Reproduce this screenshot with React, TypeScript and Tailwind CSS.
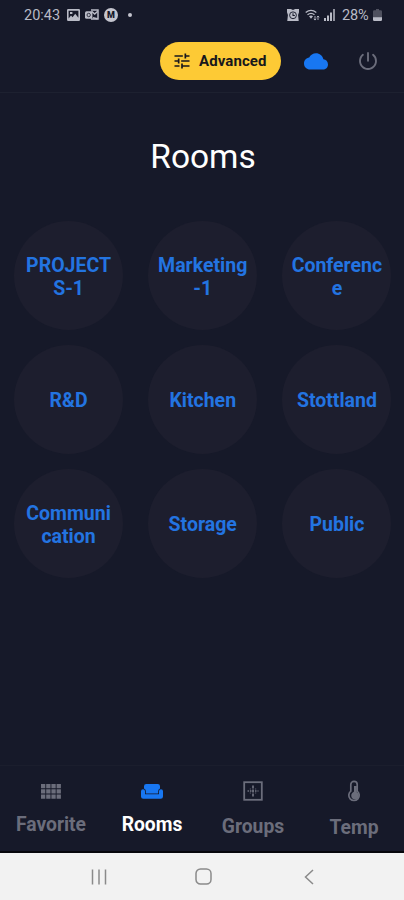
import * as React from "react";
import { IoPower } from "react-icons/io5";
import { MdTune } from "react-icons/md";

const ROOMS = [
  ["PROJECT", "S-1"],
  ["Marketing", "-1"],
  ["Conferenc", "e"],
  ["R&D"],
  ["Kitchen"],
  ["Stottland"],
  ["Communi", "cation"],
  ["Storage"],
  ["Public"],
];

const CloudIcon = () => (
  <svg width="24" height="17" viewBox="0 0 24 17" fill="currentColor">
    <path d="M19.4 6.3C18.6 2.6 15.6.2 12 .2 9 .2 6.4 1.9 5.2 4.6 2.2 5 0 7.5 0 10.5c0 3.400 2.700 6.100 6.100 6.100h12.700c2.900 0 5.200-2.300 5.200-5.200 0-2.700-2-4.900-4.600-5.100z" />
  </svg>
);

const GridIcon = () => (
  <svg width="20" height="15" viewBox="0 0 20 15" fill="currentColor">
    <path d="M0 0h4.3v4.3H0zM5.2 0h4.3v4.3H5.2zM10.4 0h4.3v4.3h-4.3zM15.6 0h4.3v4.3h-4.3z" />
    <path d="M0 5.2h4.3v4.3H0zM5.2 5.2h4.3v4.3H5.2zM10.4 5.2h4.3v4.3h-4.3zM15.6 5.2h4.3v4.3h-4.3z" />
    <path d="M0 10.4h4.3v4.3H0zM5.2 10.4h4.3v4.3H5.2zM10.4 10.4h4.3v4.3h-4.3zM15.6 10.4h4.3v4.3h-4.3z" />
  </svg>
);

const SofaIcon = () => (
  <svg width="22" height="15" viewBox="0 0 22 15" fill="currentColor">
    <path d="M5.3 0h11.4Q19 0 19 2.2v2.3q-1.8.6-1.8 2.500v2.500H4.8V7Q4.8 5.1 3 4.500V2.200Q3 0 5.300 0z" />
    <path d="M2 5.300Q4 5.300 4 7.300v3h14v-3q0-2 2-2t2 2v5.200q0 2.300-2.300 2.300H2.300Q0 14.800 0 12.500V7.300q0-2 2-2z" />
  </svg>
);

const GroupsIcon = () => (
  <svg width="20" height="20" viewBox="0 0 20 20" fill="none" stroke="currentColor">
    <rect x="1.2" y="1.2" width="17.6" height="17.6" strokeWidth="1.8" />
    <path d="M10 4.5v11" strokeWidth="1.8" strokeDasharray="3 1" />
    <path d="M4.5 10h11" strokeWidth="1.7" strokeDasharray="1.5 1" />
    <path d="M7.3 7.5v5M12.7 7.5v5" strokeWidth="1" strokeDasharray="1 1" />
  </svg>
);

const ThermometerIcon = () => (
  <svg width="14" height="22" viewBox="0 0 14 22" fill="none" stroke="currentColor">
    <path d="M3.8 11.2V4.5a3.2 3.2 0 0 1 6.4 0v6.700a5.200 5.200 0 1 1-6.400 0z" strokeWidth="1.7" />
    <path d="M7 6h2.800v6.300a3.800 3.800 0 1 1-4.600.8L7 11.500z" fill="currentColor" stroke="none" />
  </svg>
);

const TABS = [
  { label: "Favorite", icon: <GridIcon />, iconClass: "pt-[18px]", labelClass: "mt-[14px]" },
  { label: "Rooms", icon: <SofaIcon />, iconClass: "pt-[18px]", labelClass: "mt-[14px]" },
  { label: "Groups", icon: <GroupsIcon />, iconClass: "pt-[15px]", labelClass: "mt-[14px]" },
  { label: "Temp", icon: <ThermometerIcon />, iconClass: "pt-[14px]", labelClass: "mt-[14px]" },
];

function StatusBar() {
  return (
    <div className="flex h-[30px] items-center justify-between pr-[22px] pl-[24px] text-[14.5px] text-[#b9bbc6]">
      <div className="flex items-center">
        <span className="w-[37px] pt-[2px] leading-none">20:43</span>
        <svg className="ml-[6px]" width="13" height="12" viewBox="0 0 13 12" fill="currentColor">
          <path fillRule="evenodd" d="M1.2 0h10.6Q13 0 13 1.2v9.6q0 1.2-1.2 1.2H1.2Q0 12 0 10.8V1.2Q0 0 1.2 0zM1.6 1.8v7.8l2.4-3 1.6 1.6 2.6-3.4 3.2 4V1.8z" />
          <path d="M3 3h2.4v2H3z" />
        </svg>
        <svg className="ml-[5px]" width="14" height="12" viewBox="0 0 14 12" fill="none" stroke="currentColor">
          <path d="M6 1h7v9H6" strokeWidth="1.5" />
          <path d="M6.5 2.2 9.7 5l3-2.8M8 8.8l4.5.9" strokeWidth="1.5" />
          <rect x="0" y="2.2" width="7.4" height="7.6" rx="1.5" fill="currentColor" stroke="none" />
          <circle cx="3.7" cy="6" r="1.7" stroke="#161929" strokeWidth=".8" />
        </svg>
        <span className="ml-[5px] flex size-[14px] items-center justify-center rounded-full bg-[#c4c5ce] text-[9px] leading-none font-black text-[#161929]">
          M
        </span>
        <span className="ml-[10px] size-[4px] rounded-full bg-[#c4c5ce]" />
      </div>

      <div className="flex items-center">
        <svg width="12" height="12" viewBox="0 0 13 13" fill="none">
          <path d="M0 3.5V0h4.2L6.5 1.2 8.8 0H13v3.5l-1 3 .7 6.5H.3L1 6.5z" fill="currentColor" />
          <circle cx="6.5" cy="6.8" r="3.7" stroke="#161929" strokeWidth="1" />
          <path d="M6.5 4.5V7h2" stroke="#161929" strokeWidth="1.1" />
        </svg>
        <svg className="ml-[6px]" width="15" height="12" viewBox="0 0 15 12" fill="none" stroke="currentColor">
          <path d="M.7 3.6q5.3-4.4 10.6 0M2.5 5.8q3.5-2.7 7 0" strokeWidth="1.3" />
          <path d="M4 7.2q2-1.3 4 0L6 9.8z" fill="currentColor" stroke="none" />
          <path d="M10 7v4M8.8 9.8l1.2 1.3 1.2-1.3M13 11V7m-1.2 1.3L13 7l1.2 1.3" strokeWidth=".9" />
        </svg>
        <svg className="ml-[4px]" width="11" height="12" viewBox="0 0 11 12" fill="currentColor">
          <path d="M0 9h2v3H0zM3 6.5h2V12H3zM6 3.5h2V12H6z" />
          <path d="M9 0h2v12H9z" opacity=".75" />
        </svg>
        <span className="ml-[7px] w-[28px] pt-[2px] leading-none tracking-[-0.2px]">28%</span>
        <svg className="ml-[3px]" width="9" height="12" viewBox="0 0 9 12" fill="currentColor">
          <path d="M3 0h3v1.2h1.8Q9 1.2 9 2.4V9H0V2.4q0-1.2 1.2-1.2H3z" opacity=".35" />
          <path d="M0 8.3h9v2.5Q9 12 7.8 12H1.2Q0 12 0 10.8z" />
        </svg>
      </div>
    </div>
  );
}

function Header() {
  return (
    <header className="flex h-[63px] items-center justify-end border-b border-[#1d2130] pr-[25px]">
      <button className="flex h-[38px] w-[121px] items-center rounded-full bg-[#fdca35] pl-[12px] text-[15px] font-bold text-[#17171c]">
        <MdTune size={20} />
        <span className="ml-[7px] tracking-[0.1px]">Advanced</span>
      </button>
      <span className="ml-[23px] text-[#1877f2]">
        <CloudIcon />
      </span>
      <IoPower className="ml-[29px] text-[#6b6d7b]" size={22} />
    </header>
  );
}

export default function App() {
  const [activeTab, setActiveTab] = React.useState("Rooms");

  return (
    <div className="flex h-[900px] w-[404px] flex-col overflow-hidden bg-[#161929] font-['Roboto',sans-serif]">
      <StatusBar />
      <Header />

      <main className="flex-1">
        <h1 className="mt-[42px] pl-[2px] text-center text-[33.5px] leading-[44px] text-white">Rooms</h1>
        <div className="mt-[42px] grid grid-cols-3 justify-items-center gap-y-[15px] pl-[1.5px]">
          {ROOMS.map((lines) => (
            <button
              key={lines.join("")}
              className="flex size-[109px] flex-col items-center justify-center rounded-full bg-[#1d1e2e] pt-[2px] text-[19.5px] leading-[23px] font-bold text-[#2374e1]"
            >
              {lines.map((line) => (
                <span key={line}>{line}</span>
              ))}
            </button>
          ))}
        </div>
      </main>

      <nav className="grid h-[88px] grid-cols-4 border-t border-[#1b1e2d] border-b-2 border-b-[#06070c]">
        {TABS.map((tab) => {
          const active = tab.label === activeTab;
          return (
            <button
              key={tab.label}
              onClick={() => setActiveTab(tab.label)}
              className="flex flex-col items-center justify-start"
            >
              <span className={`${tab.iconClass} ${active ? "text-[#1877f2]" : "text-[#6b6d7b]"}`}>{tab.icon}</span>
              <span
                className={`${tab.labelClass} pl-[1px] text-[19.3px] leading-[23px] font-bold ${active ? "text-white" : "text-[#6b6d7b]"}`}
              >
                {tab.label}
              </span>
            </button>
          );
        })}
      </nav>

      <div className="grid h-[47px] grid-cols-[98px_106px_106px] items-center bg-[#f2f2f2] text-[#8a8a8a]">
        <svg className="ml-[91px]" width="16" height="16" viewBox="0 0 16 16" fill="none" stroke="currentColor" strokeWidth="1.5">
          <path d="M1.5 .5v15M8 .5v15M14.5 .5v15" />
        </svg>
        <svg className="ml-[97px]" width="17" height="17" viewBox="0 0 17 17" fill="none" stroke="currentColor" strokeWidth="1.5">
          <rect x="1" y="1" width="15" height="15" rx="4.5" />
        </svg>
        <svg className="ml-[100px]" width="10" height="16" viewBox="0 0 10 16" fill="none" stroke="currentColor" strokeWidth="1.5">
          <path d="M9 1 1.5 8 9 15" />
        </svg>
      </div>
    </div>
  );
}
